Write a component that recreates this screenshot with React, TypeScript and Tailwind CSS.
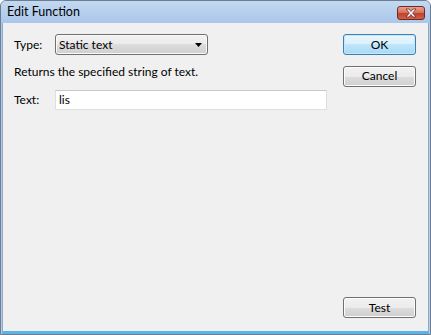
import { ReactNode } from 'react'

const font = { fontFamily: 'Lato, "Noto Sans", sans-serif' }

function WinButton({ children, primary }: { children: ReactNode; primary?: boolean }) {
  return (
    <button
      className={`w-[73px] h-[21px] rounded-[3px] border text-[12px] leading-none text-black ${
        primary
          ? 'border-[#3c7fb1] bg-[linear-gradient(#eaf6fd_0%,#d9f0fc_50%,#bee6fd_50%,#a7d9f5_100%)] shadow-[inset_0_0_0_1px_#c5e7fb]'
          : 'border-[#707070] bg-[linear-gradient(#f2f2f2_0%,#ebebeb_50%,#dddddd_50%,#cfcfcf_100%)] shadow-[inset_0_0_0_1px_#fcfcfc]'
      }`}
    >
      {children}
    </button>
  )
}

function CloseIcon() {
  return (
    <svg width="14" height="10" viewBox="0 0 14 10">
      <path d="M2 1 L5 1 L7 3.5 L9 1 L12 1 L8.6 5 L12 9 L9 9 L7 6.5 L5 9 L2 9 L5.4 5 Z" fill="#fff" stroke="#6e2a20" strokeWidth="0.8" strokeLinejoin="round" />
    </svg>
  )
}

export default function App() {
  return (
    <div className="w-[431px] h-[335px] bg-white" style={font}>
      <div className="w-full h-full flex flex-col border border-[#6b7c93] rounded-t-[6px] bg-[#b4cdea] overflow-hidden">
        {/* title bar */}
        <div className="h-[22px] flex items-center justify-between pl-[6px] pr-[5px] bg-[linear-gradient(#c3d9f1,#aac6e9)]">
          <span className="text-[12.5px] text-black leading-none pt-[1px]">Edit Function</span>
          <div className="w-[28px] h-[14px] mt-[2px] rounded-[3px] border border-[#6e2a20] bg-[linear-gradient(#e8a08f_0%,#d57560_45%,#c44028_55%,#d1614a_100%)] flex items-center justify-center">
            <CloseIcon />
          </div>
        </div>
        {/* client */}
        <div className="flex-1 mx-[1px] border-x border-[#8ea9cc] border-b-[3px] border-b-[#5ab4e6] bg-[#f0f0f0] flex pl-[11px] pr-[12px] pt-[11px] pb-[13px] gap-[16px]">
          <div className="flex-1 flex flex-col text-[12px] text-black">
            <div className="flex items-center h-[21px]">
              <span className="w-[41px]">Type:</span>
              <div className="w-[153px] h-[21px] rounded-[3px] border border-[#707070] bg-[linear-gradient(#f2f2f2_0%,#ebebeb_50%,#dddddd_50%,#cfcfcf_100%)] shadow-[inset_0_0_0_1px_#fafafa] flex items-center justify-between pl-[3px] pr-[5px]">
                <span>Static text</span>
                <svg width="7" height="4" viewBox="0 0 7 4">
                  <path d="M0 0 L7 0 L3.5 4 Z" fill="#000" />
                </svg>
              </div>
            </div>
            <div className="mt-[9px] h-[16px] flex items-center">Returns the specified string of text.</div>
            <div className="mt-[10px] flex items-center h-[20px]">
              <span className="w-[41px]">Text:</span>
              <div className="flex-1 h-[20px] bg-white border border-[#dcdfe3] border-t-[#c5c8cc] flex items-center pl-[3px]">lis</div>
            </div>
          </div>
          <div className="w-[73px] flex flex-col">
            <WinButton primary>OK</WinButton>
            <div className="mt-[7px]">
              <WinButton>Cancel</WinButton>
            </div>
            <div className="mt-auto">
              <WinButton>Test</WinButton>
            </div>
          </div>
        </div>
      </div>
    </div>
  )
}
